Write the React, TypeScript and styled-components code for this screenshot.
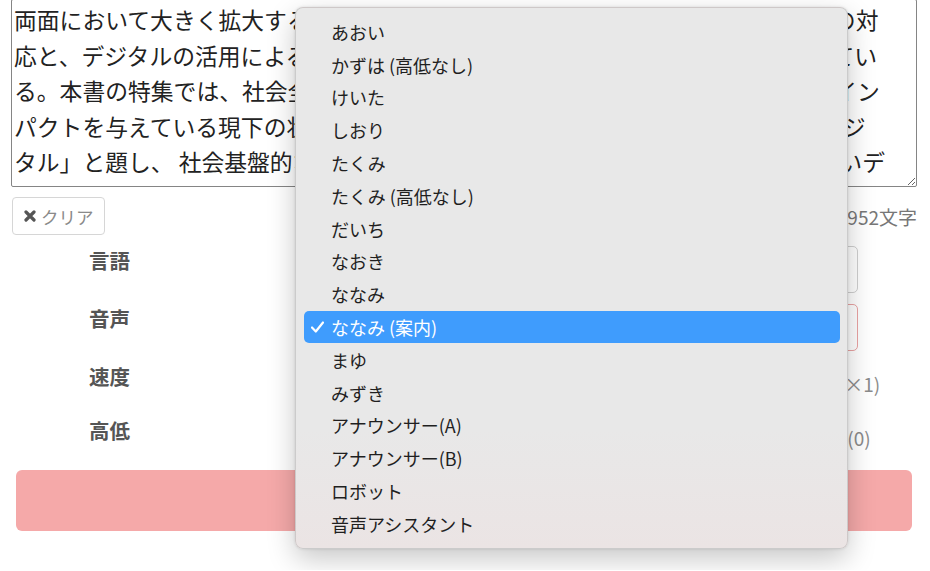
import styled, { createGlobalStyle } from "styled-components";

const GlobalStyle = createGlobalStyle`
  html, body {
    margin: 0;
    padding: 0;
    background: #fff;
    overflow: hidden;
  }
  body {
    font-family: "Noto Sans CJK JP", "Noto Sans", sans-serif;
    color: #333;
  }
`;

const Page = styled.main`
  position: relative;
  width: 930px;
  height: 571px;
  padding: 0 13px 0 11px;
  box-sizing: border-box;
`;

const TextBox = styled.textarea`
  display: block;
  box-sizing: border-box;
  width: 100%;
  height: 188px;
  margin: -1px 0 0;
  padding: 2px;
  border: 1px solid #858585;
  border-radius: 2px;
  font-family: "Noto Sans CJK JP", sans-serif;
  font-size: 22.8px;
  line-height: 35.5px;
  color: #222;
  resize: both;
  overflow-y: scroll;
  white-space: pre;
  outline: none;

  &::-webkit-scrollbar {
    width: 21px;
    background: #fafafa;
  }
  &::-webkit-scrollbar-track {
    background: #fafafa;
    border-left: 1px solid #e4e4e4;
  }
`;

const ToolRow = styled.div`
  display: flex;
  align-items: center;
  justify-content: space-between;
  margin-top: 10px;
`;

const ClearButton = styled.button`
  display: flex;
  align-items: center;
  gap: 5px;
  box-sizing: border-box;
  width: 93px;
  height: 38px;
  margin-left: 1px;
  padding: 0 0 0 11px;
  background: #fff;
  border: 1px solid #d6d6d6;
  border-radius: 4px;
  font-family: "Noto Sans CJK JP", sans-serif;
  font-size: 17.5px;
  white-space: nowrap;
  color: #8a8a8a;

  svg {
    flex: none;
  }
`;

const Count = styled.span`
  font-size: 19px;
  color: #777;
`;

const Form = styled.div`
  display: flex;
  flex-direction: column;
  gap: 11px;
  margin-top: 11px;
`;

const Row = styled.div<{ $h: number }>`
  display: flex;
  align-items: flex-start;
  height: ${(p) => p.$h}px;
`;

const Label = styled.label`
  box-sizing: border-box;
  width: 289px;
  padding-left: 78px;
  font-size: 20.5px;
  line-height: 28px;
  font-weight: 700;
  color: #555;
`;

const Select = styled.div<{ $error?: boolean }>`
  box-sizing: border-box;
  width: 558px;
  height: 47px;
  border: 1px solid ${(p) => (p.$error ? "#e9a3a3" : "#cfcfcf")};
  border-radius: 5px;
`;

const SliderWrap = styled.div`
  display: flex;
  align-items: center;
  width: 589px;
  height: 43px;
`;

const Track = styled.div`
  flex: 1;
  height: 6px;
  border-radius: 3px;
  background: #ddd;
`;

const Value = styled.span`
  width: 60px;
  text-align: center;
  font-size: 19px;
  color: #8c8c8c;
`;

const PlayButton = styled.button`
  display: block;
  box-sizing: border-box;
  width: calc(100% - 10px);
  height: 61px;
  margin: 11px 5px 0;
  border: none;
  border-radius: 6px;
  background: #f5a9a9;
`;

const Menu = styled.ul`
  position: absolute;
  left: 295px;
  top: 8px;
  width: 553px;
  box-sizing: border-box;
  margin: 0;
  padding: 7.5px 7px 7.5px 8px;
  list-style: none;
  background: linear-gradient(to bottom, #e8e8e8 0%, #e8e8e8 78%, #ebe4e4 100%);
  border: 0.5px solid rgba(0, 0, 0, 0.12);
  border-radius: 8px;
  box-shadow: 0 10px 28px rgba(0, 0, 0, 0.22), 0 0 3px rgba(0, 0, 0, 0.12);
`;

const Item = styled.li<{ $active?: boolean }>`
  display: flex;
  align-items: center;
  height: 32.8px;
  border-radius: 5px;
  font-size: 18px;
  color: ${(p) => (p.$active ? "#fff" : "#1f1f1f")};
  background: ${(p) => (p.$active ? "#3f9cfd" : "transparent")};
`;

const Check = styled.span`
  display: flex;
  justify-content: center;
  width: 27px;
`;

const voices = [
  "あおい",
  "かずは (高低なし)",
  "けいた",
  "しおり",
  "たくみ",
  "たくみ (高低なし)",
  "だいち",
  "なおき",
  "ななみ",
  "ななみ (案内)",
  "まゆ",
  "みずき",
  "アナウンサー(A)",
  "アナウンサー(B)",
  "ロボット",
  "音声アシスタント",
];

const text = [
  "両面において大きく拡大するなど、社会経済活動への影響は大きく、この変化への対",
  "応と、デジタルの活用による新たな付加価値の創出が、これまで以上に求められてい",
  "る。本書の特集では、社会全体のデジタル化が私たちの生活や経済活動に大きなイン",
  "パクトを与えている現下の状況を踏まえて、「ポストコロナの経済社会に向けたデジ",
  "タル」と題し、 社会基盤的な役割を担うデジタルの現状及び課題を整理し、新しいデ",
].join("\n");

export default function App() {
  const selected = "ななみ (案内)";
  return (
    <Page>
      <GlobalStyle />
      <TextBox defaultValue={text} spellCheck={false} />

      <ToolRow>
        <ClearButton>
          <svg width="12" height="12" viewBox="0 0 12 12">
            <path
              d="M2 2 L10 10 M10 2 L2 10"
              stroke="#555"
              strokeWidth="3.2"
              strokeLinecap="round"
            />
          </svg>
          クリア
        </ClearButton>
        <Count>1952文字</Count>
      </ToolRow>

      <Form>
        <Row $h={47}>
          <Label>言語</Label>
          <Select />
        </Row>
        <Row $h={47}>
          <Label>音声</Label>
          <Select $error />
        </Row>
        <Row $h={43}>
          <Label>速度</Label>
          <SliderWrap>
            <Track />
            <Value>(×1)</Value>
          </SliderWrap>
        </Row>
        <Row $h={43}>
          <Label>高低</Label>
          <SliderWrap>
            <Track />
            <Value>(0)</Value>
          </SliderWrap>
        </Row>
      </Form>

      <PlayButton aria-label="読み上げ" />

      <Menu>
        {voices.map((v) => (
          <Item key={v} $active={v === selected}>
            <Check>
              {v === selected && (
                <svg width="13" height="12" viewBox="0 0 13 12">
                  <polyline
                    points="1,6.5 4.8,10.5 12,1.5"
                    fill="none"
                    stroke="#fff"
                    strokeWidth="2.2"
                    strokeLinecap="round"
                    strokeLinejoin="round"
                  />
                </svg>
              )}
            </Check>
            {v}
          </Item>
        ))}
      </Menu>
    </Page>
  );
}
